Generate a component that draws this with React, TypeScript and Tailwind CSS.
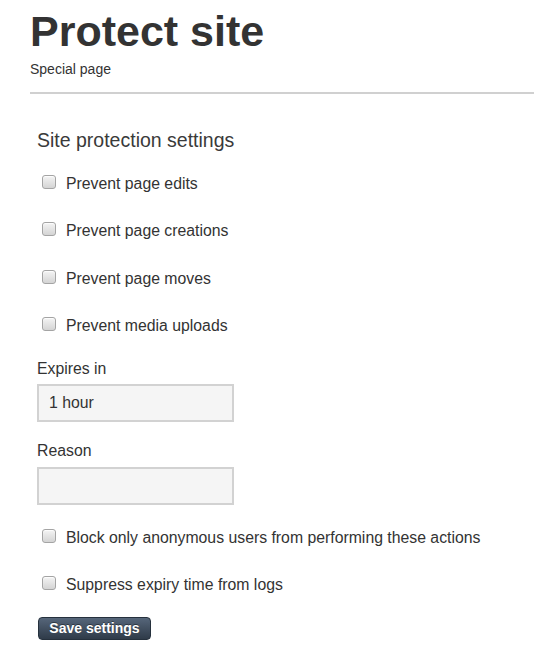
import React from "react";

function Box() {
  return (
    <span className="mt-[1px] block h-[14px] w-[14px] shrink-0 rounded-[3px] border border-[#a4a4a4] bg-gradient-to-b from-[#f4f4f4] to-[#d4d4d4] shadow-[inset_0_1px_1px_rgba(255,255,255,0.8)]" />
  );
}

function Row({ label, className }: { label: string; className: string }) {
  return (
    <div className={"flex items-start gap-[10px] pl-[5px] " + className}>
      <Box />
      <span className="text-[15.8px] leading-[20px] text-[#333]">{label}</span>
    </div>
  );
}

export default function App() {
  return (
    <div className="min-h-[660px] w-[534px] bg-white font-['Liberation_Sans',Arial,sans-serif] text-[#333]">
      <div className="pl-[30px]">
        <h1 className="pt-[10px] text-[43px] font-bold leading-[43px] text-[#333]">Protect site</h1>
        <div className="mt-[8px] text-[14px] leading-[16px] text-[#333]">Special page</div>
        <div className="mt-[15px] h-[2px] bg-[#d0d0d0]" />
      </div>
      <div className="pl-[37px]">
        <div className="mt-[34px] text-[19.5px] leading-[24px] text-[#3a3a3a]">Site protection settings</div>
        <Row label="Prevent page edits" className="mt-[22px]" />
        <Row label="Prevent page creations" className="mt-[27px]" />
        <Row label="Prevent page moves" className="mt-[28px]" />
        <Row label="Prevent media uploads" className="mt-[27px]" />
        <div className="mt-[23px] text-[15.8px] leading-[20px]">Expires in</div>
        <div className="mt-[5px] flex h-[38px] w-[197px] items-center border-2 border-[#d2d2d2] bg-[#f5f5f5] pl-[10px] text-[15.8px]">
          1 hour
        </div>
        <div className="mt-[19px] text-[15.8px] leading-[20px]">Reason</div>
        <div className="mt-[6px] h-[38px] w-[197px] border-2 border-[#d2d2d2] bg-[#f5f5f5]" />
        <Row label="Block only anonymous users from performing these actions" className="mt-[23px]" />
        <Row label="Suppress expiry time from logs" className="mt-[27px]" />
        <button className="ml-[1px] mt-[22px] flex h-[23px] w-[113px] items-center justify-center rounded-[4px] border border-[#26313d] bg-gradient-to-b from-[#56667a] to-[#2f3b49] text-[14px] font-bold text-white [text-shadow:0_-1px_0_rgba(0,0,0,0.4)]">
          Save settings
        </button>
      </div>
    </div>
  );
}
